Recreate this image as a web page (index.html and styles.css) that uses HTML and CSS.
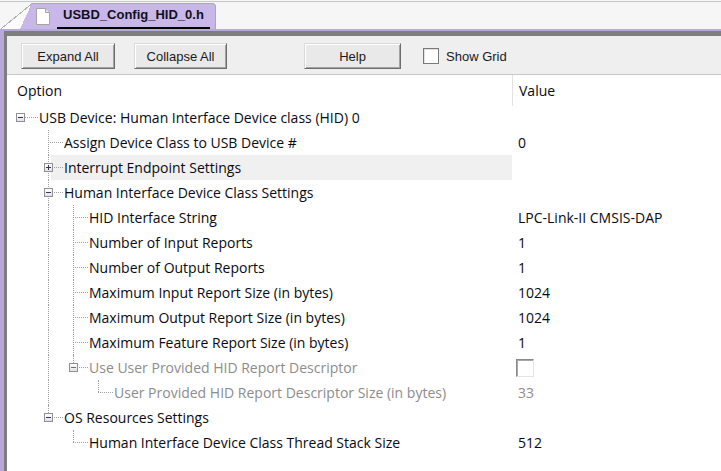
FILE: index.html
```html
<!DOCTYPE html>
<html>
<head>
<meta charset="utf-8">
<title>USBD_Config_HID_0.h</title>
<link rel="stylesheet" href="styles.css">
</head>
<body>
<div class="tabstrip">
  <div class="tab">
    <svg class="docicon" width="14" height="17" viewBox="0 0 14 17"><path d="M0.5 0.5H9.5L13.5 4.5V16.5H0.5Z" fill="#fff" stroke="#a4a4a4"/><path d="M9.5 0.5V4.5H13.5" fill="#ececec" stroke="#a4a4a4"/></svg>
    <span class="tabtitle">USBD_Config_HID_0.h</span>
  </div>
</div>
<div class="frame">
  <div class="inner">
    <div class="toolbar">
      <button class="btn b-expand">Expand All</button>
      <button class="btn b-collapse">Collapse All</button>
      <button class="btn b-help">Help</button>
      <label class="grid"><span class="cb"></span>Show Grid</label>
    </div>
    <div class="tree">
      <div class="head"><div class="opt">Option</div><div class="val">Value</div></div>

      <div class="row">
        <div class="opt"><span class="g g0 h"><i class="box minus"></i></span><span class="lbl">USB Device: Human Interface Device class (HID) 0</span></div>
        <div class="val"></div>
      </div>
      <div class="row">
        <div class="opt"><span class="g g0"></span><span class="g v h"></span><span class="lbl">Assign Device Class to USB Device #</span></div>
        <div class="val">0</div>
      </div>
      <div class="row">
        <div class="opt"><span class="g g0"></span><span class="g v h"><i class="box plus"></i></span><span class="lbl hl">Interrupt Endpoint Settings</span></div>
        <div class="val"></div>
      </div>
      <div class="row">
        <div class="opt"><span class="g g0"></span><span class="g v h"><i class="box minus"></i></span><span class="lbl">Human Interface Device Class Settings</span></div>
        <div class="val"></div>
      </div>
      <div class="row">
        <div class="opt"><span class="g g0"></span><span class="g v"></span><span class="g v h"></span><span class="lbl">HID Interface String</span></div>
        <div class="val">LPC-Link-II CMSIS-DAP</div>
      </div>
      <div class="row">
        <div class="opt"><span class="g g0"></span><span class="g v"></span><span class="g v h"></span><span class="lbl">Number of Input Reports</span></div>
        <div class="val">1</div>
      </div>
      <div class="row">
        <div class="opt"><span class="g g0"></span><span class="g v"></span><span class="g v h"></span><span class="lbl">Number of Output Reports</span></div>
        <div class="val">1</div>
      </div>
      <div class="row">
        <div class="opt"><span class="g g0"></span><span class="g v"></span><span class="g v h"></span><span class="lbl">Maximum Input Report Size (in bytes)</span></div>
        <div class="val">1024</div>
      </div>
      <div class="row">
        <div class="opt"><span class="g g0"></span><span class="g v"></span><span class="g v h"></span><span class="lbl">Maximum Output Report Size (in bytes)</span></div>
        <div class="val">1024</div>
      </div>
      <div class="row">
        <div class="opt"><span class="g g0"></span><span class="g v"></span><span class="g v h"></span><span class="lbl">Maximum Feature Report Size (in bytes)</span></div>
        <div class="val">1</div>
      </div>
      <div class="row dis">
        <div class="opt"><span class="g g0"></span><span class="g v"></span><span class="g vt h"><i class="box minus"></i></span><span class="lbl">Use User Provided HID Report Descriptor</span></div>
        <div class="val"><span class="vcb"></span></div>
      </div>
      <div class="row dis">
        <div class="opt"><span class="g g0"></span><span class="g v"></span><span class="g"></span><span class="g vt h"></span><span class="lbl">User Provided HID Report Descriptor Size (in bytes)</span></div>
        <div class="val">33</div>
      </div>
      <div class="row">
        <div class="opt"><span class="g g0"></span><span class="g vt h"><i class="box minus"></i></span><span class="lbl">OS Resources Settings</span></div>
        <div class="val"></div>
      </div>
      <div class="row">
        <div class="opt"><span class="g g0"></span><span class="g"></span><span class="g vt h"></span><span class="lbl">Human Interface Device Class Thread Stack Size</span></div>
        <div class="val">512</div>
      </div>
    </div>
  </div>
</div>
</body>
</html>
```

FILE: styles.css
```css
* { box-sizing: border-box; }
html, body { margin: 0; padding: 0; }
body {
  width: 721px;
  height: 471px;
  overflow: hidden;
  display: flex;
  flex-direction: column;
  background: #fff;
  font-family: "Open Sans", "Noto Sans", sans-serif;
  color: #0a0a12;
}

/* tab strip */
.tabstrip {
  height: 29px;
  flex: none;
  background: #f6f6f6;
  box-shadow: inset 0 1px #f6f6f6, inset 0 2px #c6c6c6;
  padding: 3px 0 0 32px;
  display: flex;
}
.tab {
  position: relative;
  width: 184px;
  height: 26px;
  background: #c9b7e9;
  border-top: 1px solid #a9a9a9;
  border-right: 1px solid #a9a9a9;
  border-top-right-radius: 4px;
  display: flex;
  align-items: center;
  padding-left: 4px;
}
.tab::before {
  content: "";
  position: absolute;
  left: -32px;
  top: -1px;
  bottom: 0;
  width: 32px;
  background:
    linear-gradient(to top left, #c9b7e9 50%, transparent 50%) right top / 12px 100% no-repeat,
    linear-gradient(to top left, #fbfbfb calc(50% - 1px), #b0b0b0 calc(50% - 1px), #b0b0b0 50%, transparent 50%);
}
.docicon { display: block; flex: none; }
.tabtitle {
  align-self: flex-end;
  margin-left: 7px;
  padding: 0 6px;
  height: 22px;
  line-height: 19px;
  border-bottom: 2px solid #000;
  font: bold 13px "Liberation Sans", Arial, sans-serif;
  color: #10101c;
}

/* frame */
.frame {
  flex: 1;
  display: flex;
  flex-direction: column;
  border-top: 2px solid #b6abd6;
  border-left: 4px solid #b8a8da;
}
.inner {
  flex: 1;
  display: flex;
  flex-direction: column;
  border-top: 5px solid #7e7e7e;
  border-left: 3px solid #7e7e7e;
  background: #fff;
}

/* toolbar */
.toolbar {
  flex: none;
  height: 39px;
  background: #efefef;
  border-bottom: 1px solid #c8c8c8;
  padding: 7px 0 0 14px;
  display: flex;
  align-items: flex-start;
}
.btn {
  height: 26px;
  padding: 0;
  margin: 0;
  font: 13px "Liberation Sans", Arial, sans-serif;
  color: #1a1a1a;
  background: #e9e9e9;
  border: 1px solid;
  border-color: #dadada #6d6d6d #6d6d6d #dadada;
  box-shadow: inset 1px 1px #fff, inset -1px -1px #a3a3a3;
}
.b-expand { width: 94px; }
.b-collapse { width: 93px; margin-left: 19px; }
.b-help { width: 97px; margin-left: 77px; }
.grid {
  display: flex;
  align-items: center;
  height: 26px;
  margin-left: 22px;
  font: 13px "Liberation Sans", Arial, sans-serif;
  color: #1a1a1a;
}
.cb {
  width: 16px;
  height: 16px;
  margin-right: 7px;
  background: #fff;
  border: 1px solid #7a7a7a;
  box-shadow: inset 1px 1px #e2e2e2;
}

/* tree */
.tree {
  flex: 1;
  font-size: 14px;
}
.head {
  display: flex;
  height: 31px;
  line-height: 31px;
}
.head .opt { padding-left: 10px; }
.head .val { border-left: 1px solid #e2e2e2; padding-left: 6px; }
.row {
  display: flex;
  height: 25px;
  line-height: 25px;
}
.head + .row { margin-top: -1px; }
.opt {
  width: 505px;
  flex: none;
  display: flex;
  padding-left: 1px;
  white-space: nowrap;
}
.val {
  flex: 1;
  display: flex;
  align-items: center;
  padding-left: 6px;
  white-space: nowrap;
}
.lbl { padding-left: 4px; }
.lbl.hl {
  flex: 1;
  margin-left: -9px;
  padding-left: 13px;
  background: #f0f0f0;
}
.dis { color: #8c8c8c; }

.g {
  position: relative;
  flex: none;
  width: 25px;
  height: 25px;
}
.g0 { width: 27px; }
.g.v::before {
  content: "";
  position: absolute;
  left: 13px;
  top: 0;
  bottom: 0;
  border-left: 1px dotted #a0a0a0;
}
.g.vt::before {
  content: "";
  position: absolute;
  left: 13px;
  top: 0;
  height: 12px;
  border-left: 1px dotted #a0a0a0;
}
.g.h::after {
  content: "";
  position: absolute;
  left: 13px;
  right: -3px;
  top: 12px;
  border-top: 1px dotted #a0a0a0;
}
.box {
  position: absolute;
  z-index: 1;
  left: 9px;
  top: 8px;
  width: 9px;
  height: 9px;
  border: 1px solid #909090;
  background: linear-gradient(#ffffff, #e2e2e2);
}
.g0 .box { left: 8px; }
.box::before {
  content: "";
  position: absolute;
  left: 1px;
  top: 3px;
  width: 5px;
  height: 1px;
  background: #2f3858;
}
.box.plus::after {
  content: "";
  position: absolute;
  left: 3px;
  top: 1px;
  width: 1px;
  height: 5px;
  background: #2f3858;
}
.dis .box::before { background: #6a6f80; }

.vcb {
  width: 18px;
  height: 18px;
  margin-left: -2px;
  background: #fff;
  border: 1px solid;
  border-color: #8a8a8a #e4e4e4 #e4e4e4 #8a8a8a;
  box-shadow: inset 1px 1px #a8a8a8;
}
```
